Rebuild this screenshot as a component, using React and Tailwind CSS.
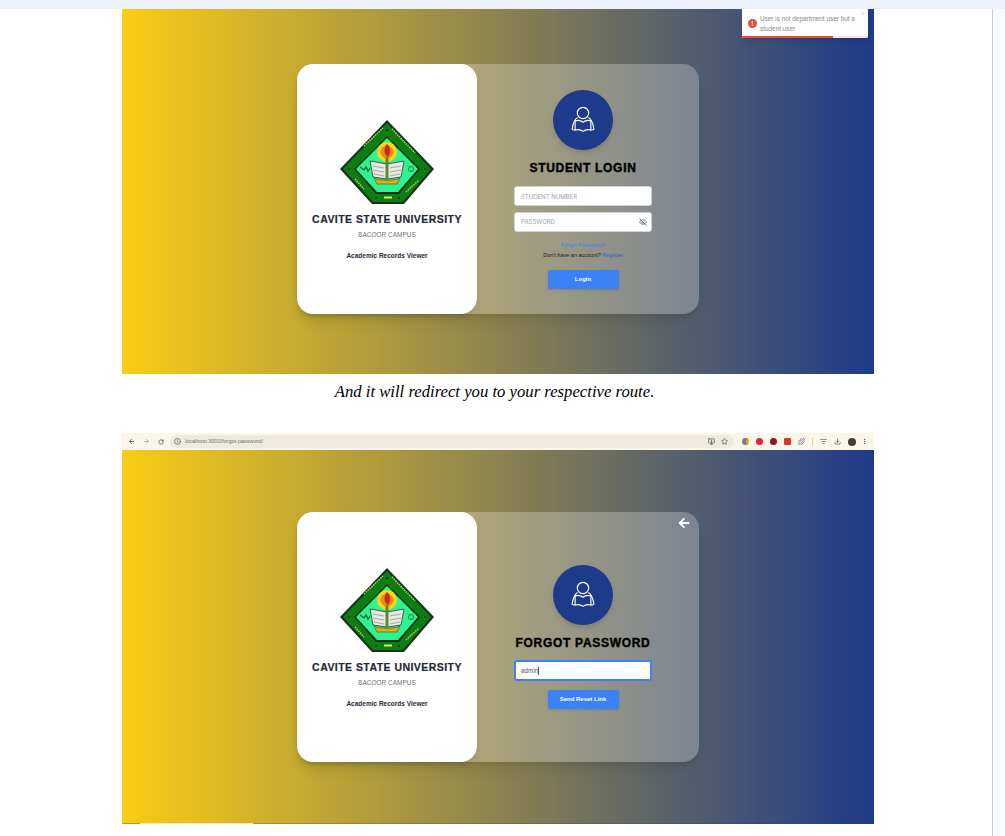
import { ArrowLeft, ArrowRight, RotateCw, Info, MonitorDown, Star, EyeOff, Download, ListFilter, MoreVertical, X, Puzzle } from 'lucide-react'
import { FaArrowLeft } from 'react-icons/fa'

function CvsuLogo() {
  return (
    <svg viewBox="0 0 96 86" className="w-[96px] h-[86px]">
      <polygon points="48,1 95,50 65,85 33,85 1,50" fill="#16331a" />
      <polygon points="48,4 92,50 64,83 34,83 4,50" fill="#0b7d12" />
      <polygon points="48,17 81,50 60,75 37,75 15,50" fill="#0c2e12" />
      <polygon points="48,19 79,50 59,73 38,73 17,50" fill="#2cf58f" />
      <circle cx="48" cy="33" r="10" fill="#f7d51d" />
      <circle cx="48" cy="33" r="6.500" fill="#ef8a1a" />
      <path d="M48 25c4 4 4 8 1 13-4-3-5-8-1-13z" fill="#c9281a" />
      <polygon points="31,42 48,45 48,60 34,58" fill="#e8e8e4" stroke="#333" strokeWidth="0.8" />
      <polygon points="65,42 48,45 48,60 62,58" fill="#e8e8e4" stroke="#333" strokeWidth="0.8" />
      <path d="M34 47l11 2M34 51l11 2M35 55l10 2M62 47l-11 2M62 51l-11 2M61 55l-10 2" stroke="#888" strokeWidth="0.7" />
      <rect x="46.500" y="38" width="3" height="22" fill="#5f8a2a" />
      <path d="M35 59c5 3 21 3 26 0l-3 6H38z" fill="#e0ad12" stroke="#333" strokeWidth="0.5" />
      <path d="M21 48l4 3 2-3 2 4 2-3" stroke="#1b5a22" strokeWidth="1.200" fill="none" />
      <circle cx="72" cy="50" r="2.500" fill="none" stroke="#1b5a22" strokeWidth="0.8" />
      <path d="M25 27l19-18M53 10l23 24" stroke="#b9d84a" strokeWidth="1.500" strokeDasharray="1.500 1" fill="none" />
      <path d="M16 60l9 10M67 73l13-12" stroke="#b9d84a" strokeWidth="1.500" strokeDasharray="1.500 1" fill="none" />
      <rect x="45" y="77.500" width="8" height="2" fill="#d9e96a" />
      <g fill="#222">
        <circle cx="48" cy="11" r="1" />
        <circle cx="10" cy="50" r="1" />
        <circle cx="86" cy="50" r="1" />
        <circle cx="37" cy="79" r="1" />
        <circle cx="60" cy="79" r="1" />
      </g>
    </svg>
  )
}

function ReaderIcon() {
  return (
    <svg viewBox="0 0 32 32" fill="none" stroke="white" strokeWidth="1.3" strokeLinejoin="round" strokeLinecap="round" className="w-[28px] h-[30px]">
      <circle cx="16" cy="8" r="6.500" />
      <path d="M9.500 13.500C6.500 15 5 18 3.500 26.500c1 1 2 1 3.500 .8" />
      <path d="M22.500 13.500C25.500 15 27 18 28.500 26.500c-1 1-2 1-3.500 .8" />
      <path d="M7 17c3-1 6.500-.5 9 1.500 2.500-2 6-2.500 9-1.500v10.500c-3-1-6.500-.5-9 1.500-2.500-2-6-2.500-9-1.500z" />
    </svg>
  )
}

function Scene({ topPad, height, children }) {
  return (
    <div
      className={`w-[752px] flex justify-center bg-[linear-gradient(to_right,#facc15,#1e3a8a)] ${height} ${topPad}`}
    >
      <div className="w-[402px] h-[250px] flex rounded-[16px] bg-white/25 shadow-lg relative">
        <div className="w-[180px] h-full bg-white rounded-[16px] flex flex-col items-center pt-[55px] shadow-md">
          <CvsuLogo />
          <h2 className="mt-[7px] text-[10.500px] leading-[14px] font-bold tracking-[0.45px] text-[#1f2937] [-webkit-text-stroke:0.2px_#1f2937]">CAVITE STATE UNIVERSITY</h2>
          <p className="mt-[4px] text-[6.500px] leading-[10px] text-[#6b7280]">BACOOR CAMPUS</p>
          <p className="mt-[11px] text-[6.500px] leading-[10px] font-semibold text-[#1f2937]">Academic Records Viewer</p>
        </div>
        <div className="flex-1 flex flex-col items-center pr-[10px] relative">
          {children}
        </div>
      </div>
    </div>
  )
}

function Avatar({ className }) {
  return (
    <div className={`w-[60px] h-[60px] rounded-full bg-[#1e3a8a] flex items-center justify-center shadow-md ${className}`}>
      <ReaderIcon />
    </div>
  )
}

function LoginForm() {
  return (
    <>
      <Avatar className="mt-[26px]" />
      <h1 className="mt-[10px] text-[12px] leading-[16px] font-bold tracking-[0.7px] text-black [-webkit-text-stroke:0.4px_black]">STUDENT LOGIN</h1>
      <div className="mt-[10px] w-[138px] h-[20px] bg-white rounded-[3px] border border-[#d1d5db] flex items-center px-[6px] text-[6px] text-[#9ca3af] font-['Inter']">
        STUDENT NUMBER
      </div>
      <div className="mt-[6px] w-[138px] h-[20px] bg-white rounded-[3px] border border-[#d1d5db] flex items-center justify-between pl-[6px] pr-[4px] pb-px text-[6px] text-[#9ca3af] font-['Inter']">
        PASSWORD
        <EyeOff size={8} strokeWidth={2} className="text-[#374151]" />
      </div>
      <p className="mt-[9px] text-[5.500px] leading-[8px] text-[#3b82f6]">Forgot Password?</p>
      <p className="mt-[2px] text-[5.500px] leading-[8px] text-[#111827]">
        Don't have an account? <span className="text-[#2563eb] font-medium">Register</span>
      </p>
      <button className="mt-[11px] w-[71px] h-[19px] bg-[#3b82f6] rounded-[2px] text-white text-[6px] font-bold shadow">Login</button>
    </>
  )
}

function ForgotForm() {
  return (
    <>
      <FaArrowLeft className="absolute right-[9px] top-[5px] text-white text-[12px]" />
      <Avatar className="mt-[53px]" />
      <h1 className="mt-[10px] text-[12px] leading-[16px] font-bold tracking-[0.7px] text-black [-webkit-text-stroke:0.4px_black]">FORGOT PASSWORD</h1>
      <div className="mt-[9px] w-[138px] h-[21px] bg-white rounded-[3px] border-2 border-[#3b82f6] flex items-center px-[5px] text-[6px] text-[#4b5563] font-['Inter']">
        admin<span className="w-px h-[8px] bg-[#4b5563]" />
      </div>
      <button className="mt-[9px] w-[71px] h-[19px] bg-[#3b82f6] rounded-[2px] text-white text-[6px] font-bold shadow">Send Reset Link</button>
    </>
  )
}

function BrowserBar() {
  return (
    <div className="w-[752px] h-[17px] bg-[#fbf6ea] flex items-center pl-[5px] pr-[6px] text-[#374151]">
      <ArrowLeft size={7} strokeWidth={2.500} className="ml-[1px]" />
      <ArrowRight size={7} strokeWidth={2.500} className="ml-[8px] text-[#9ca3af]" />
      <RotateCw size={6} strokeWidth={2.500} className="ml-[8px]" />
      <div className="ml-[6px] flex-1 h-[13px] rounded-full bg-[#eeeadf] flex items-center pl-[4px] pr-[6px]">
        <Info size={7} strokeWidth={2} />
        <span className="ml-[4px] text-[5.500px] text-[#6b7280] flex-1">localhost:3000/forgot-password/</span>
        <MonitorDown size={7} />
        <Star size={7} className="ml-[6px]" />
      </div>
      <div className="ml-[8px] flex items-center gap-[7px]">
        <span className="w-[7px] h-[7px] rounded-full bg-[conic-gradient(#ea4335,#fbbc05,#34a853,#4285f4,#ea4335)]" />
        <span className="w-[7px] h-[7px] rounded-full bg-[#e5203f]" />
        <span className="w-[7px] h-[7px] rounded-full bg-[#8f1424]" />
        <span className="w-[7px] h-[7px] rounded-[1px] bg-[#d9352b]" />
        <Puzzle size={7} />
        <span className="w-px h-[8px] bg-[#e8d48a]" />
        <ListFilter size={7} />
        <Download size={7} />
        <span className="w-[8px] h-[8px] rounded-full bg-[#4a3a36]" />
        <MoreVertical size={7} className="-ml-[2px]" />
      </div>
    </div>
  )
}

export default function App() {
  return (
    <div className="w-[1005px] h-[836px] overflow-hidden bg-white flex flex-col font-['Liberation_Sans',Arial,sans-serif]">
      <div className="h-[9px] bg-[#ecf1fb] shrink-0" />
      <div className="flex flex-1 min-h-0">
        <main className="w-[993px] pl-[122px] relative border-r border-[#c9ccd1]">
          {/* Error toast */}
          <div className="absolute left-[742px] top-0 w-[126px] h-[29px] bg-white shadow-md rounded-b-[2px] flex z-10 overflow-hidden">
            <span className="ml-[6px] mt-[10px] w-[9px] h-[9px] rounded-full bg-[#e74c3c] text-white text-[7px] leading-[9px] font-bold text-center shrink-0">!</span>
            <p className="ml-[3px] mt-[5px] text-[6.400px] leading-[9.500px] text-[#8a8a8a] w-[98px]">User is not department user but a student user</p>
            <X size={5} strokeWidth={2} className="absolute right-[3px] top-[2px] text-[#9ca3af]" />
            <div className="absolute left-0 bottom-0 h-[2px] w-full bg-[#fbe4e1]" />
            <div className="absolute left-0 bottom-0 h-[2px] w-[91px] bg-[#e74c3c]" />
          </div>

          <Scene height="h-[365px]" topPad="pt-[55px]">
            <LoginForm />
          </Scene>

          <p className="w-[752px] h-[59px] pt-[7px] pr-[7px] text-center italic text-[16.700px] leading-[22px] text-black font-['Liberation_Serif',serif]">
            And it will redirect you to your respective route.
          </p>

          <BrowserBar />
          <Scene height="h-[373px]" topPad="pt-[62px]">
            <ForgotForm />
          </Scene>
          <div className="w-[752px] h-px bg-[linear-gradient(to_right,#b79a20_18px,#f3e7b5_18px,#f3e7b5_131px,#a8963a_131px,#1e3a8a)]" />
        </main>
        <aside className="flex-1 bg-[#f8faff]" />
      </div>
    </div>
  )
}
